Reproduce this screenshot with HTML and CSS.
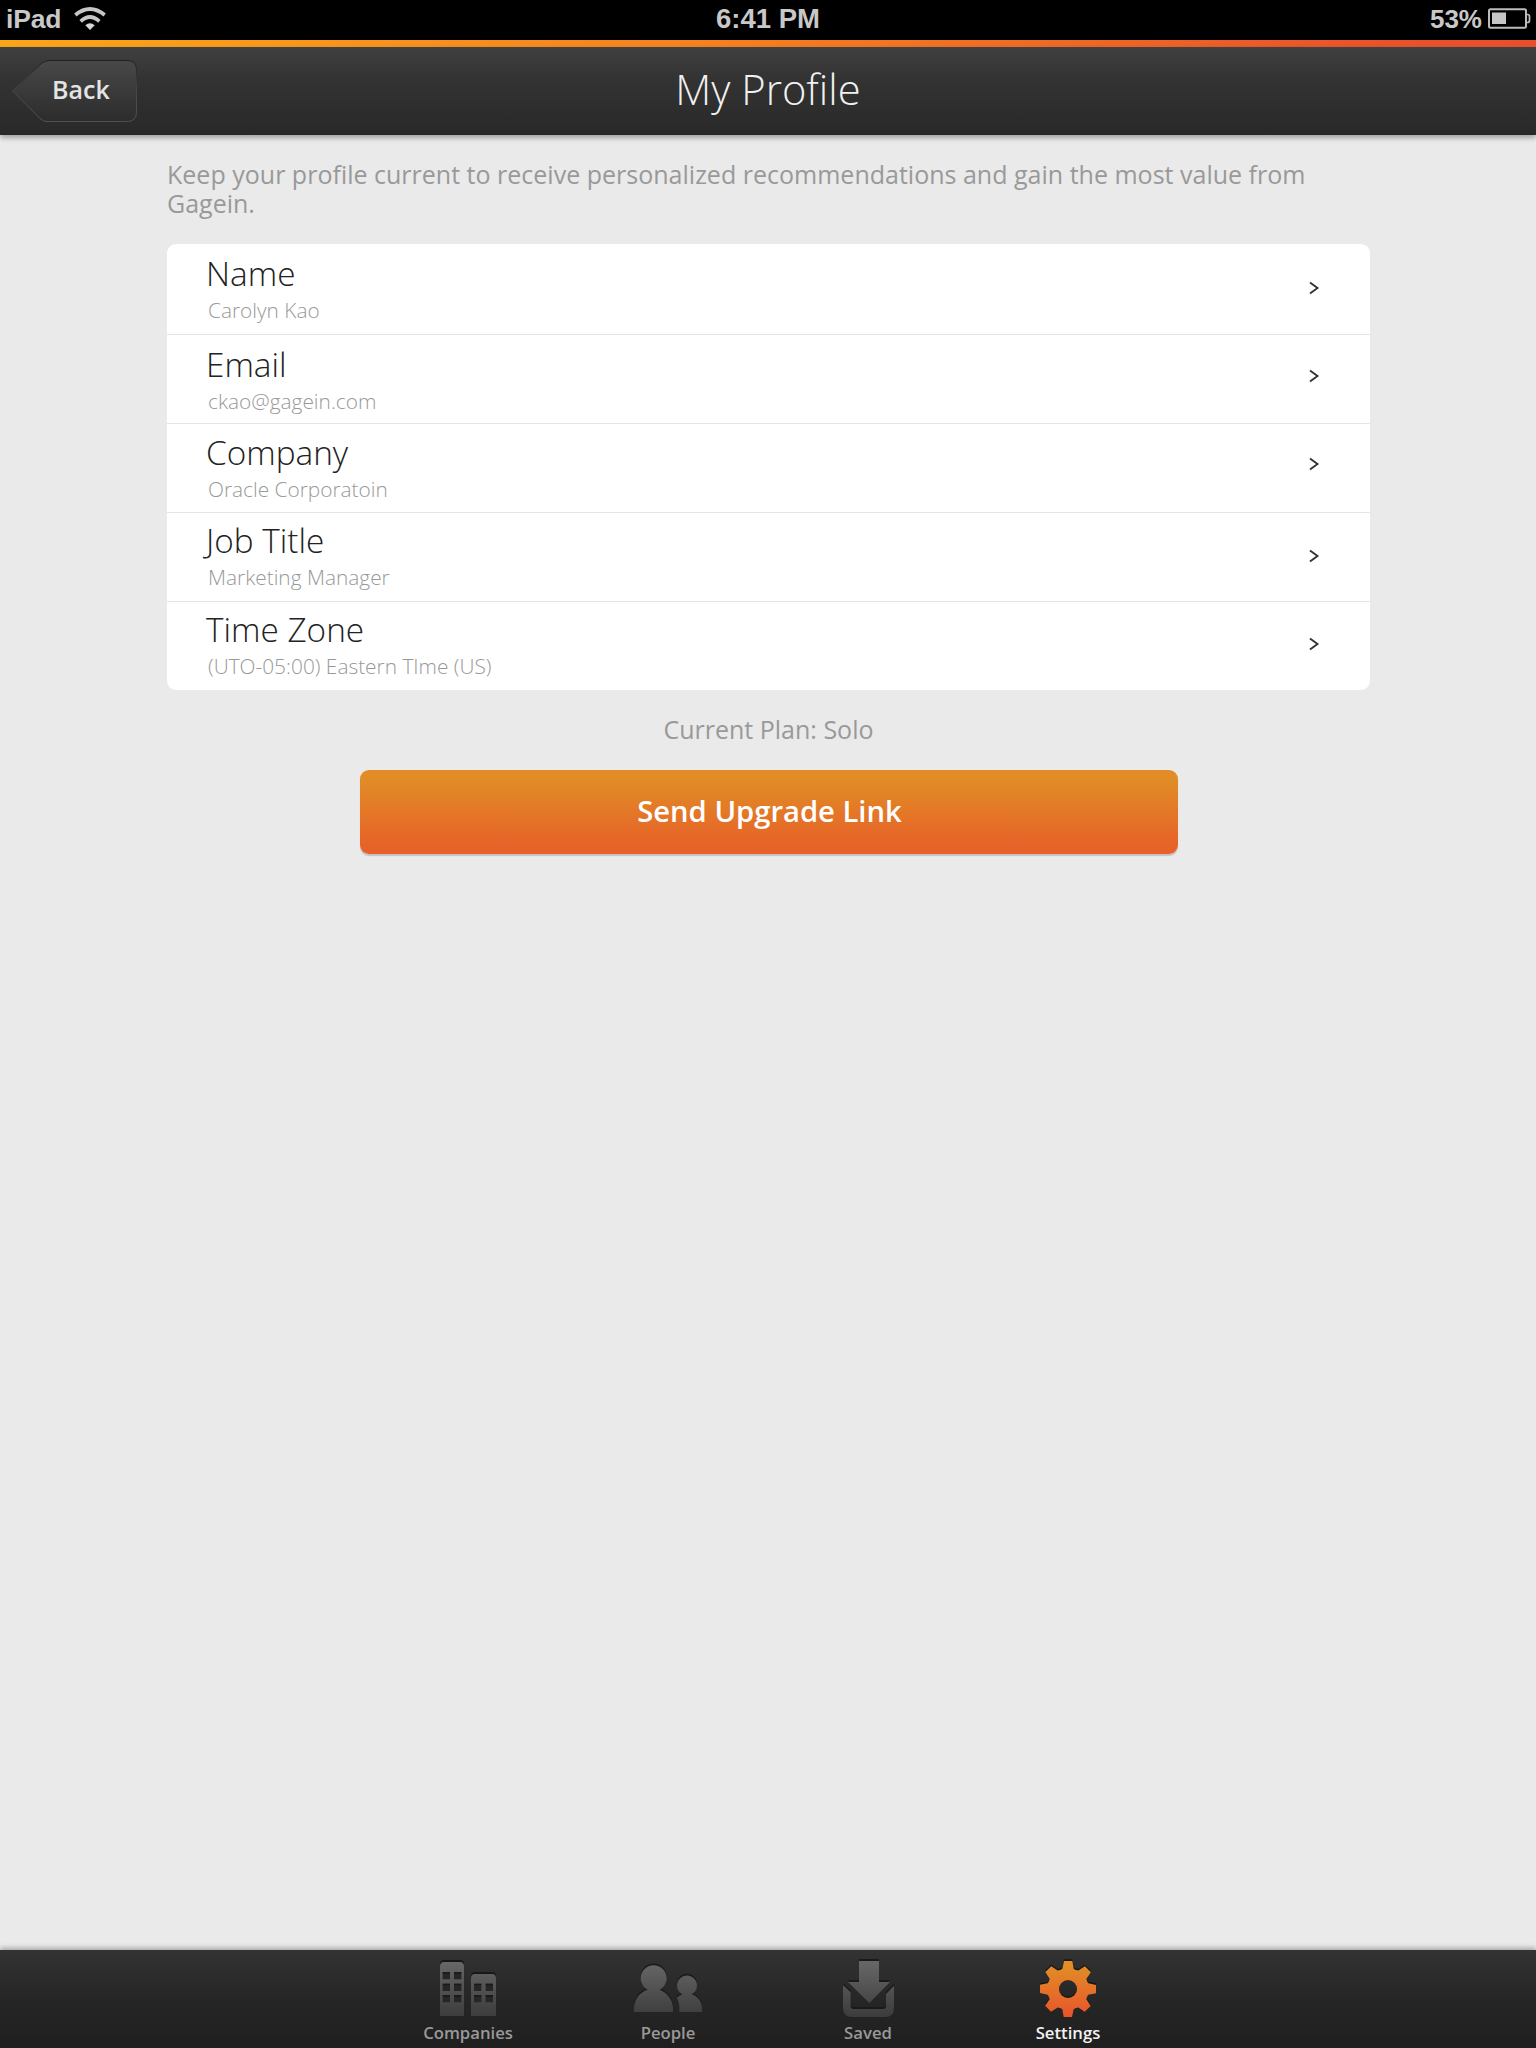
FILE: index.html
```
<!DOCTYPE html>
<html lang="en">
<head>
<meta charset="utf-8">
<title>My Profile</title>
<link rel="stylesheet" href="styles.css">
</head>
<body>
<div class="screen">
  <div class="status">
    <div class="carrier"><span class="device">iPad</span>
      <svg class="wifi" width="32" height="24" viewBox="0 0 96 72"><g fill="none" stroke="#c6c6c6" stroke-width="11"><path d="M4 24Q48 -12 92 24"/><path d="M20 43Q48 17 76 43"/></g><path d="M34 55Q48 43 62 55L48 69Z" fill="#d6d6d6"/></svg>
    </div>
    <div class="clock">6:41 PM</div>
    <div class="power"><span class="percent">53%</span>
      <svg class="battery" width="43" height="22" viewBox="0 0 43 22"><rect x="1" y="1.2" width="37" height="18.6" rx="1.5" fill="none" stroke="#bcbcbc" stroke-width="2"/><path d="M38 6.5h1.500q2 0 2 2v4q0 2-2 2H38" fill="none" stroke="#bcbcbc" stroke-width="1.700"/><rect x="4" y="4.500" width="14" height="11.500" fill="#c6c6c6"/></svg>
    </div>
  </div>
  <div class="accent"></div>
  <header class="navbar">
    <a class="back">
      <svg class="back-shape" width="128" height="66" viewBox="0 0 128 66">
        <defs><linearGradient id="bk" x2="0" y2="1"><stop offset="0" stop-color="#484848"/><stop offset="1" stop-color="#2c2c2c"/></linearGradient>
        <linearGradient id="edge" x2="0" y2="1"><stop offset="0" stop-color="#202020"/><stop offset=".15" stop-color="#2c2c2c"/><stop offset=".5" stop-color="#484848"/><stop offset="1" stop-color="#505050"/></linearGradient></defs>
        <path d="M2.500 33L32 5Q36 2.500 39 2.500H117Q126.500 2.500 126.500 12V54Q126.500 63.500 117 63.500H37Q33 63.500 30 60.500Z" fill="url(#bk)" stroke="url(#edge)"/>
      </svg>
      <span class="back-label">Back</span>
    </a>
    <h1 class="title">My Profile</h1>
  </header>
  <main class="content">
    <p class="intro">Keep your profile current to receive personalized recommendations and gain the most value from Gagein.</p>
    <ul class="card">
      <li class="row r1"><div class="info"><div class="label">Name</div><div class="value">Carolyn Kao</div></div><svg class="chev" width="11" height="14" viewBox="0 0 11 14"><path d="M1 1.500L8.500 7L1 12.500"/></svg></li>
      <li class="row r2"><div class="info"><div class="label">Email</div><div class="value">ckao@gagein.com</div></div><svg class="chev" width="11" height="14" viewBox="0 0 11 14"><path d="M1 1.500L8.500 7L1 12.500"/></svg></li>
      <li class="row r3"><div class="info"><div class="label">Company</div><div class="value">Oracle Corporatoin</div></div><svg class="chev" width="11" height="14" viewBox="0 0 11 14"><path d="M1 1.500L8.500 7L1 12.500"/></svg></li>
      <li class="row r4"><div class="info"><div class="label">Job Title</div><div class="value">Marketing Manager</div></div><svg class="chev" width="11" height="14" viewBox="0 0 11 14"><path d="M1 1.500L8.500 7L1 12.500"/></svg></li>
      <li class="row r5"><div class="info"><div class="label">Time Zone</div><div class="value">(UTO-05:00) Eastern TIme (US)</div></div><svg class="chev" width="11" height="14" viewBox="0 0 11 14"><path d="M1 1.500L8.500 7L1 12.500"/></svg></li>
    </ul>
    <p class="plan">Current Plan: Solo</p>
    <button class="upgrade">Send Upgrade Link</button>
  </main>
  <nav class="tabs">
    <a class="tab">
      <svg width="100" height="64" viewBox="54 48 300 192">
        <defs><linearGradient id="gr" gradientUnits="userSpaceOnUse" x1="0" y1="62" x2="0" y2="230"><stop offset="0" stop-color="#686868"/><stop offset="1" stop-color="#3c3c3c"/></linearGradient></defs>
        <path d="M120 100V72Q120 60 132 60H180Q192 60 192 72V100ZM213 130V108Q213 96 225 96H276Q288 96 288 108V130Z" fill="#181818"/>
        <path d="M120 228V80Q120 66 132 66H180Q192 66 192 80V228ZM213 228V115Q213 102 225 102H276Q288 102 288 115V228Z" fill="url(#gr)"/>
        <path d="M128 96h22v22h-22zM162 96h22v22h-22zM128 131h22v22h-22zM162 131h22v22h-22zM128 165h22v22h-22zM162 165h22v22h-22zM222 131h22v22h-22zM257 131h22v22h-22zM222 165h22v22h-22zM257 165h22v22h-22z" fill="#262626"/>
        <path d="M128 96h22v5h-22zM162 96h22v5h-22zM128 131h22v5h-22zM162 131h22v5h-22zM128 165h22v5h-22zM162 165h22v5h-22zM222 131h22v5h-22zM257 131h22v5h-22zM222 165h22v5h-22zM257 165h22v5h-22z" fill="#1a1a1a"/>
      </svg>
      <span class="tab-label">Companies</span>
    </a>
    <a class="tab">
      <svg width="100" height="64" viewBox="654 48 300 192">
        <defs><path id="ppl" d="M702 216V205C702 178 720 156 743 149A39 39 0 1 1 779 149C802 158 819 180 819 206V216ZM838 216V207C838 194 836 184 831 173Q837 167 847 163A30 30 0 1 1 875 163C893 168 906 186 906 206V216Z"/></defs>
        <use href="#ppl" y="-5" fill="#1a1a1a"/><use href="#ppl" fill="url(#gr)"/>
      </svg>
      <span class="tab-label">People</span>
    </a>
    <a class="tab">
      <svg width="100" height="64" viewBox="-6 48 300 192">
        <defs><path id="sv" d="M117 63H177V126H210L148 189L84 126H117ZM69 135L92 157V197Q92 207 102 207H188Q198 207 198 197V162L222 137V203Q222 231 194 231H97Q69 231 69 203Z"/></defs>
        <use href="#sv" y="-6" fill="#1a1a1a"/><use href="#sv" fill="url(#gr)"/>
      </svg>
      <span class="tab-label">Saved</span>
    </a>
    <a class="tab active">
      <svg width="100" height="64" viewBox="594 48 300 192">
        <defs>
          <linearGradient id="og" gradientUnits="userSpaceOnUse" x1="0" y1="63" x2="0" y2="231"><stop offset="0" stop-color="#e19226"/><stop offset="1" stop-color="#e8542b"/></linearGradient>
          <path id="tooth" d="M732 63H757L761 86L775 95V125H713V95L727 86Z"/>
          <mask id="gear" maskUnits="userSpaceOnUse" x="594" y="48" width="300" height="192">
            <g fill="#fff"><circle cx="744" cy="147" r="58"/>
            <use href="#tooth"/><use href="#tooth" transform="rotate(45 744 147)"/><use href="#tooth" transform="rotate(90 744 147)"/><use href="#tooth" transform="rotate(135 744 147)"/><use href="#tooth" transform="rotate(180 744 147)"/><use href="#tooth" transform="rotate(225 744 147)"/><use href="#tooth" transform="rotate(270 744 147)"/><use href="#tooth" transform="rotate(315 744 147)"/></g>
            <circle cx="744" cy="147" r="27" fill="#000"/>
          </mask>
        </defs>
        <g transform="translate(0 -5)"><rect x="594" y="48" width="300" height="192" fill="#181818" mask="url(#gear)"/></g>
        <rect x="594" y="48" width="300" height="192" fill="url(#og)" mask="url(#gear)"/>
      </svg>
      <span class="tab-label">Settings</span>
    </a>
  </nav>
</div>
</body>
</html>
```
FILE: styles.css
```
* { box-sizing: border-box; }
body { margin: 0; font-family: "Open Sans", sans-serif; background: #eaeaea; }
.screen { width: 1536px; height: 2048px; display: flex; flex-direction: column; overflow: hidden; }

.status { height: 40px; background: #000; color: #c8c8c8; display: grid; grid-template-columns: 1fr auto 1fr; font: bold 27.500px/38px "Liberation Sans", sans-serif; }
.carrier { display: flex; padding-left: 6px; gap: 13px; }
.device { font-size: 26.500px; letter-spacing: -0.200px; }
.wifi { margin-top: 7px; }
.power { display: flex; justify-content: flex-end; gap: 6px; padding-right: 5px; }
.percent { font-size: 26px; line-height: 39px; }
.battery { margin-top: 8px; }

.accent { height: 7px; background: linear-gradient(90deg, #faa61a, #f58220 45%, #e8532b 90%, #e8502c); }
.navbar { height: 88px; display: grid; grid-template-columns: 1fr auto 1fr; background: linear-gradient(#404040, #333 35%, #292929); box-shadow: 0 3px 5px rgba(0,0,0,.3); }
.back { width: 128px; height: 66px; margin: 11px 0 0 10px; display: grid; }
.back-shape, .back-label { grid-area: 1 / 1; }
.back-label { padding-left: 42px; font-weight: 600; font-size: 25px; line-height: 62px; color: #e4e4e4; }
.title { margin: 0; font-weight: 300; font-size: 41.700px; line-height: 84px; color: #f0f0f0; }

.content { flex: 1; padding: 25px 166px 0 167px; }
.intro { margin: 0; padding-bottom: 26px; font-size: 25.020px; line-height: 29px; color: #999; }
.card { margin: 0; padding: 0; list-style: none; background: #fff; border-radius: 9px; }
.row { height: 89px; border-bottom: 1px solid #e4e4e4; padding: 6px 50px 0 39px; display: flex; justify-content: space-between; }
.label { font-weight: 300; font-size: 33.350px; line-height: 44px; color: #222; }
.value { padding-left: 2px; font-weight: 300; font-size: 20.850px; line-height: 30px; color: #999; }
.chev { margin-top: 28px; }
.chev path { fill: none; stroke: #333; stroke-width: 1.900; }
.r1 { height: 91px; padding-top: 7px; }
.r1 .chev { margin-top: 30px; }
.r2 { padding-top: 7px; }
.r2 .chev { margin-top: 27px; }
.r3 .chev { margin-top: 27px; }
.r4, .r5 { padding-top: 5px; }
.r4 .chev { margin-top: 31px; }
.r5 { height: 88px; border: 0; }
.r5 .chev { margin-top: 30px; }
.plan { margin: 0; padding-top: 22px; height: 80px; text-align: center; font-size: 25px; line-height: 34px; color: #999; }
.upgrade { display: block; width: 818px; height: 84px; margin: 0 auto; padding: 0 0 2px 2px; border: 0; border-radius: 9px; background: linear-gradient(#e18c26, #e18c26 12%, #e66628 82%, #e7602a); box-shadow: 0 2px 1px #c2c2c2; color: #fff; font: 600 29.200px "Open Sans", sans-serif; }

.tabs { height: 98px; display: flex; justify-content: center; background: linear-gradient(#333, #262626 50%, #1f1f1f); box-shadow: 0 -2px 5px rgba(0,0,0,.3); }
.tab { width: 200px; padding-top: 6px; display: flex; flex-direction: column; align-items: center; color: #999; }
.tab-label { margin-top: 2px; font-weight: 600; font-size: 16.700px; line-height: 22px; }
.active { color: #f2f2f2; }
```
